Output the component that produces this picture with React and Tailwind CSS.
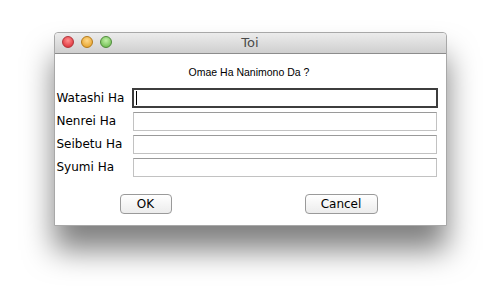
export default function App() {
    const fields = ["Watashi Ha", "Nenrei Ha", "Seibetu Ha", "Syumi Ha"];
    const font = { fontFamily: '"DejaVu Sans", "Liberation Sans", sans-serif' };

    return (
        <div className="w-[500px] h-[300px] bg-white flex justify-center pt-[32px] overflow-hidden" style={font}>
            <div className="w-[393px] h-[194px] flex flex-col bg-white border border-[#a8a8a8] rounded-t-[4px] shadow-[0_24px_30px_rgba(0,0,0,0.5)]">
                {/* title bar */}
                <div className="relative h-[21px] flex items-center justify-center rounded-t-[4px] border-b border-[#8c8c8c] bg-gradient-to-b from-[#ececec] to-[#cfcfcf]">
                    <div className="absolute left-[7px] top-[3px] flex gap-[7px]">
                        <span className="w-[12px] h-[12px] rounded-full border border-[#b0343a] bg-[radial-gradient(circle_at_50%_35%,#ff8f8f,#d8202a)]" />
                        <span className="w-[12px] h-[12px] rounded-full border border-[#b47a1a] bg-[radial-gradient(circle_at_50%_35%,#ffd88a,#e29a1c)]" />
                        <span className="w-[12px] h-[12px] rounded-full border border-[#4e8a3a] bg-[radial-gradient(circle_at_50%_35%,#c2f0a8,#5fb441)]" />
                    </div>
                    <span className="text-[13px] text-[#4a4a4a]">Toi</span>
                </div>

                {/* body */}
                <div className="flex-1 flex flex-col pl-[2px] pr-[8px]">
                    <p className="text-[10.5px] text-black text-center mt-[11px] mb-[7px] pl-[4px] font-['Liberation_Sans',sans-serif]">Omae Ha Nanimono Da ?</p>
                    <div className="flex flex-col gap-[4px]">
                        {fields.map((f, i) => (
                            <div key={f} className="flex items-center">
                                <label className="w-[76px] text-[12px] text-black">{f}</label>
                                {i === 0 ? (
                                    <div className="w-[306px] h-[20px] border-2 border-[#3d3d3d] bg-white flex items-center pl-[2px]">
                                        <span className="w-px h-[14px] bg-black" />
                                    </div>
                                ) : (
                                    <div className="w-[304px] h-[19px] border border-[#c2c2c2] border-t-[#9a9a9a] bg-white" />
                                )}
                            </div>
                        ))}
                    </div>
                    <div className="flex mt-[17px]">
                        <button className="ml-[63px] w-[52px] h-[20px] rounded-[4px] border border-[#9a9a9a] bg-gradient-to-b from-white to-[#ececec] text-[12px] text-black leading-none">OK</button>
                        <button className="ml-[133px] w-[73px] h-[20px] rounded-[4px] border border-[#9a9a9a] bg-gradient-to-b from-white to-[#ececec] text-[12px] text-black leading-none">Cancel</button>
                    </div>
                </div>
            </div>
        </div>
    );
}
